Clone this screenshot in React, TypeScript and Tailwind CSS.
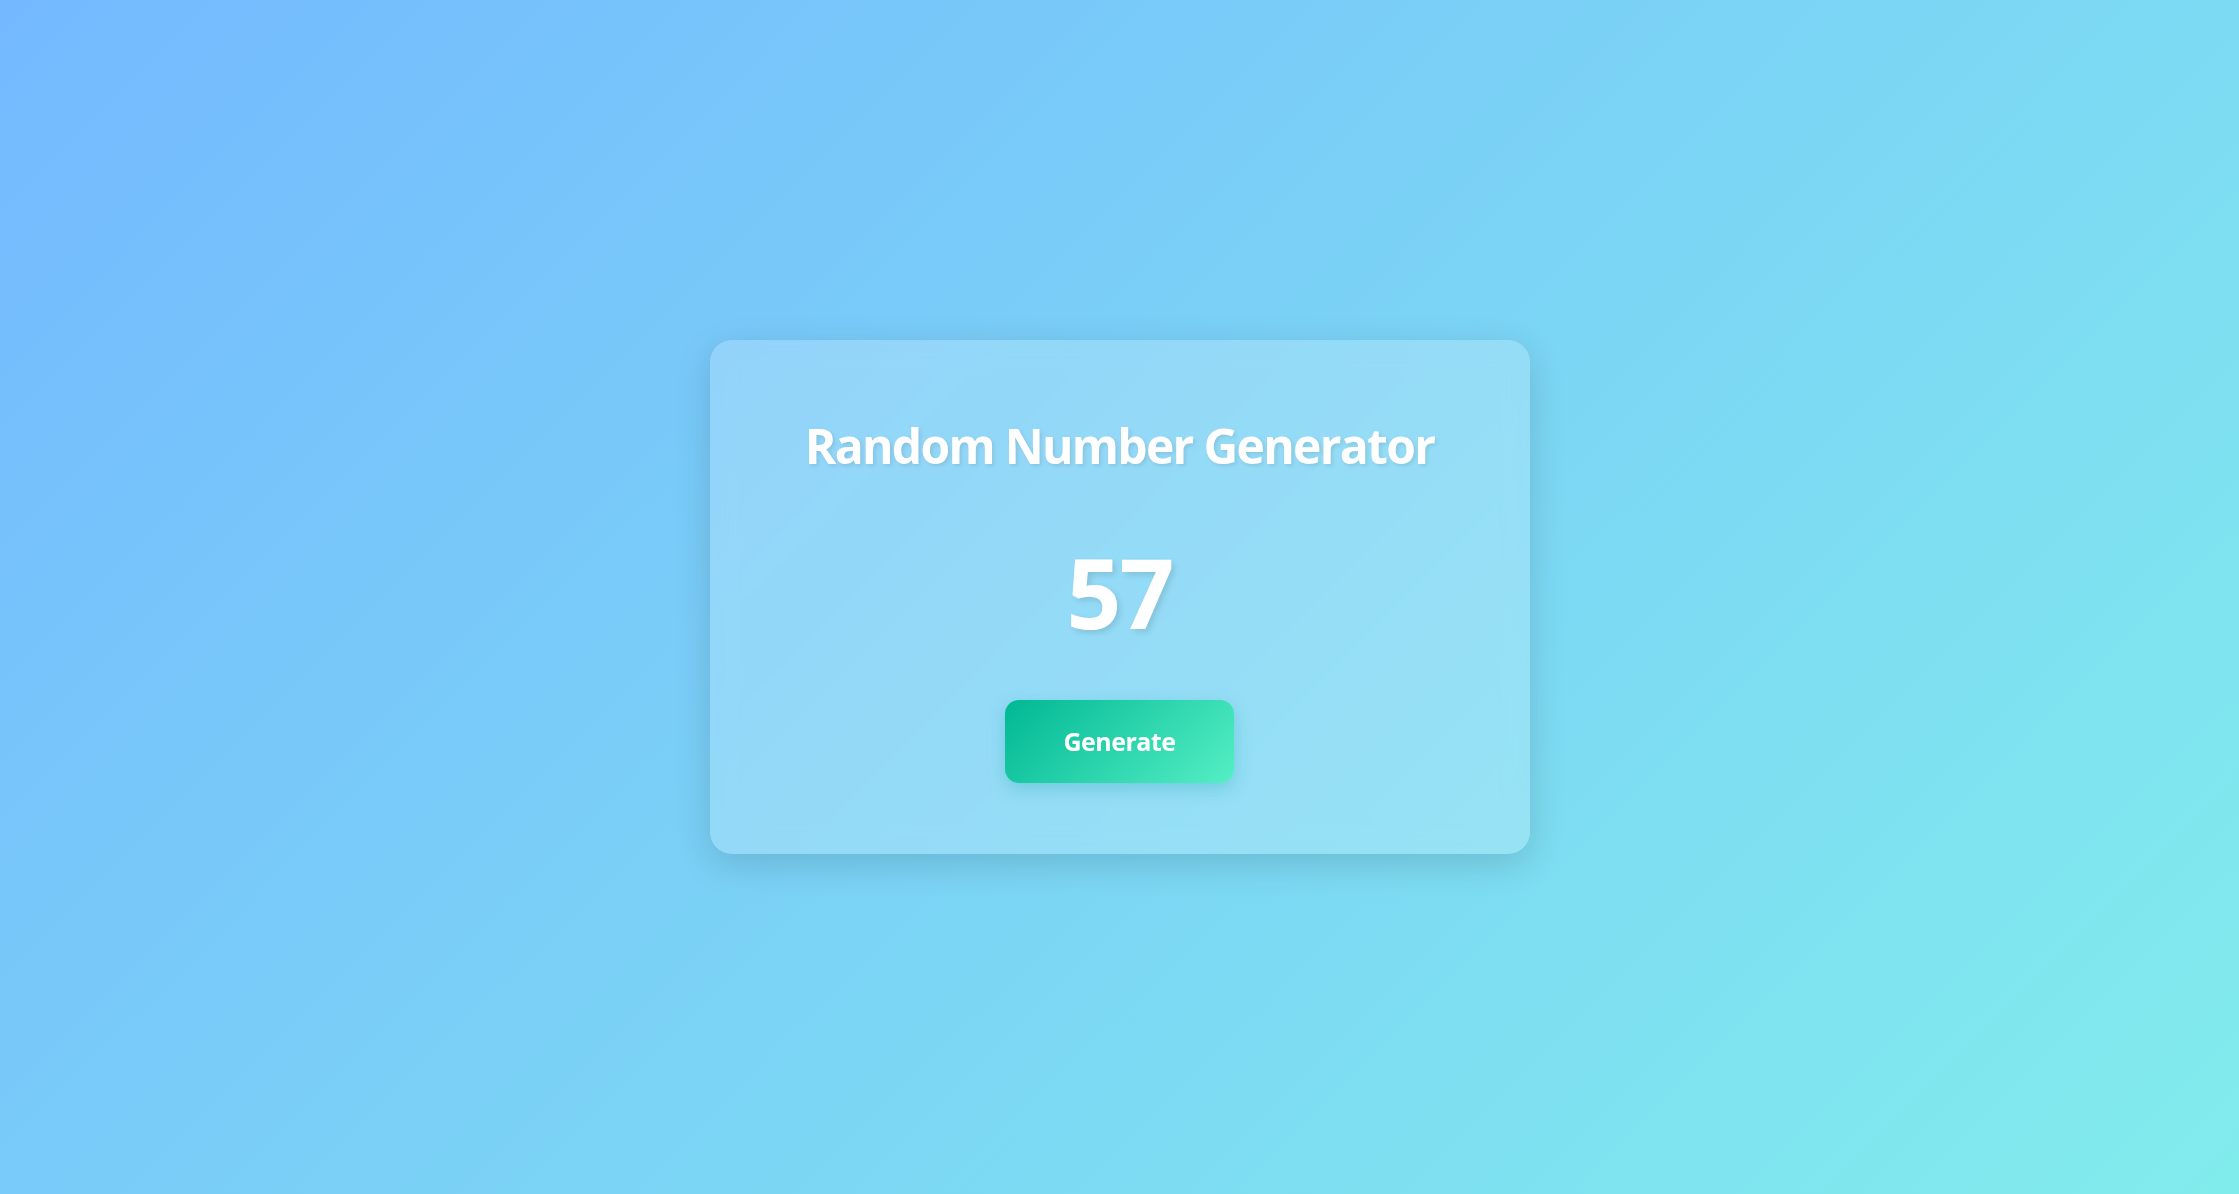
import React, { useState } from "react";

export default function App() {
  const [value, setValue] = useState(57);

  return (
    <div className="min-h-screen w-full flex items-center justify-center bg-[linear-gradient(135deg,#74b9ff,#81ecec)] font-['Open_Sans','Noto_Sans',sans-serif]">
      <div className="w-[820px] flex flex-col items-center rounded-[22px] bg-white/20 pt-[77px] pb-[71px] shadow-[0_10px_36px_rgba(0,0,0,0.14)] backdrop-blur-md">
        <h1 className="text-[48px] leading-[58px] font-bold text-white tracking-[-1.7px] [text-shadow:2px_2px_4px_rgba(0,0,0,0.1)]">
          Random Number Generator
        </h1>
        <div className="mt-[69px] text-[96px] leading-[96px] font-bold text-white tracking-[-2px] [text-shadow:3px_3px_6px_rgba(0,0,0,0.12)]">
          {value}
        </div>
        <button
          onClick={() => setValue(Math.floor(Math.random() * 100) + 1)}
          className="mt-[60px] w-[229px] h-[83px] rounded-[14px] bg-[linear-gradient(135deg,#00b894,#55efc4)] text-white text-[25px] font-bold tracking-[-0.5px] shadow-[0_6px_18px_rgba(0,150,150,0.25)] cursor-pointer"
        >
          Generate
        </button>
      </div>
    </div>
  );
}
